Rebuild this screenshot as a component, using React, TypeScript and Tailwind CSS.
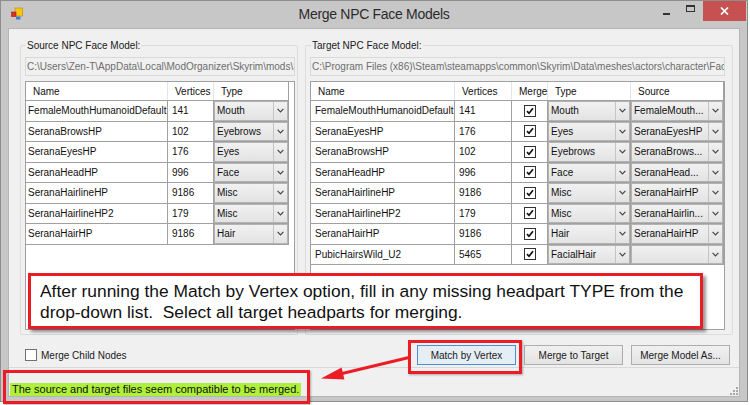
const SOURCE = [
  ["FemaleMouthHumanoidDefault", "141", "Mouth"],
  ["SeranaBrowsHP", "102", "Eyebrows"],
  ["SeranaEyesHP", "176", "Eyes"],
  ["SeranaHeadHP", "996", "Face"],
  ["SeranaHairlineHP", "9186", "Misc"],
  ["SeranaHairlineHP2", "179", "Misc"],
  ["SeranaHairHP", "9186", "Hair"],
];

const TARGET = [
  ["FemaleMouthHumanoidDefault", "141", "Mouth", "FemaleMouth..."],
  ["SeranaEyesHP", "176", "Eyes", "SeranaEyesHP"],
  ["SeranaBrowsHP", "102", "Eyebrows", "SeranaBrows..."],
  ["SeranaHeadHP", "996", "Face", "SeranaHead..."],
  ["SeranaHairlineHP", "9186", "Misc", "SeranaHairHP"],
  ["SeranaHairlineHP2", "179", "Misc", "SeranaHairlin..."],
  ["SeranaHairHP", "9186", "Hair", "SeranaHairHP"],
  ["PubicHairsWild_U2", "5465", "FacialHair", ""],
];

function Chevron() {
  return (
    <svg width="7" height="5" viewBox="0 0 7 5">
      <path d="M0.6 0.9 L3.5 3.8 L6.4 0.9" fill="none" stroke="#444" strokeWidth="1.2" />
    </svg>
  );
}

function Combo({ text }: { text: string }) {
  return (
    <div className="h-full flex border border-[#b3b3b3] bg-linear-to-b from-[#f1f1f1] to-[#e3e3e3]">
      <div className="flex-1 flex items-center pl-[2px] whitespace-nowrap overflow-hidden">{text}</div>
      <div className="w-[14px] border-l border-[#c4c4c4] flex items-center justify-center">
        <Chevron />
      </div>
    </div>
  );
}

function Check() {
  return (
    <div className="w-[12px] h-[12px] border border-[#333] bg-white flex items-center justify-center">
      <svg width="8" height="8" viewBox="0 0 8 8">
        <path d="M1 4.2 L3 6.3 L7 1.3" fill="none" stroke="#111" strokeWidth="1.7" />
      </svg>
    </div>
  );
}

function Header({ cols }: { cols: [string, string][] }) {
  return (
    <div className="flex h-[19px] w-fit border-b border-[#a0a0a0]">
      {cols.map(([label, w], i) => (
        <div
          key={label}
          className={`${w} flex items-center pl-[7px] border-r ${
            i === cols.length - 1 ? "border-[#a0a0a0]" : "border-[#e4e4e4]"
          }`}
        >
          {label}
        </div>
      ))}
    </div>
  );
}

function PathBox({ text }: { text: string }) {
  return (
    <div className="h-[19px] border border-[#d9d9d9] bg-[#f0f0f0] flex items-center pl-px text-[#6d6d6d] whitespace-nowrap overflow-hidden">
      {text}
    </div>
  );
}

export default function App() {
  return (
    <div className="w-[750px] h-[405px] bg-white relative overflow-hidden font-['Liberation_Sans',Arial,sans-serif] text-[10px] text-[#111]">
      {/* window */}
      <div className="w-[748px] h-[402px] bg-[#c7c7c7] border border-[#8e8e8e] flex flex-col">
        {/* title bar */}
        <div className="h-[27px] grid grid-cols-[1fr_auto_1fr] shrink-0">
          <div className="flex items-start pl-[10px] pt-[6px]">
            <svg width="12" height="13" viewBox="0 0 12 13">
              <rect x="4" y="1" width="7.5" height="8" fill="#f5c518" stroke="#c89a00" strokeWidth="0.8" />
              <rect x="0.5" y="5" width="4.5" height="4.5" fill="#d9312b" stroke="#9e1d17" strokeWidth="0.6" />
              <rect x="5" y="9.5" width="4.5" height="3" fill="#3f7fd6" />
            </svg>
          </div>
          <div className="flex items-center text-[14px] tracking-[-0.3px] text-[#2b2b2b] pb-[1px]">
            Merge NPC Face Models
          </div>
          <div className="flex justify-end items-start">
            <div className="w-[22px] h-[20px] flex items-center justify-center">
              <div className="w-[7px] h-[2px] bg-[#333] mt-[6px]" />
            </div>
            <div className="w-[26px] h-[20px] flex items-center justify-center">
              <div className="w-[9px] h-[7px] border border-t-2 border-[#333] mb-[6px]" />
            </div>
            <div className="w-[43px] h-[20px] bg-[#c75050] mr-px flex items-center justify-center">
              <svg width="9" height="8" viewBox="0 0 9 8">
                <path d="M1 0.5 L8 7.5 M8 0.5 L1 7.5" stroke="#fff" strokeWidth="1.7" />
              </svg>
            </div>
          </div>
        </div>

        {/* client */}
        <div className="flex-1 mx-[7px] mb-[4px] bg-[#f0f0f0] border border-[#b5b5b5] flex flex-col">
          <div className="flex mt-[10px]">
            {/* Source */}
            <fieldset className="w-[278px] ml-[11px] border border-[#dcdcdc] rounded-[2px] pl-[4px] pb-[4px]">
              <legend className="ml-px px-px leading-[13px] text-[#1a1a1a]">Source NPC Face Model:</legend>
              <div className="w-[270px] mt-[5px]">
                <PathBox text={"C:\\Users\\Zen-T\\AppData\\Local\\ModOrganizer\\Skyrim\\mods\\Serana"} />
              </div>
              <div className="w-[270px] h-[249px] mt-[5px] border border-[#a0a0a0] bg-white overflow-hidden">
                <Header cols={[["Name", "w-[142px]"], ["Vertices", "w-[46px]"], ["Type", "w-[75px]"]]} />
                {SOURCE.map(([n, v, t]) => (
                  <div key={n} className="flex w-fit h-[20.5px]">
                    <div className="w-[142px] border-r border-b border-[#a0a0a0] flex items-center pl-[2px]">{n}</div>
                    <div className="w-[46px] border-r border-b border-[#a0a0a0] flex items-center pl-[4px]">{v}</div>
                    <div className="w-[75px] border-r border-b border-[#a0a0a0]">
                      <Combo text={t} />
                    </div>
                  </div>
                ))}
              </div>
            </fieldset>

            {/* Target */}
            <fieldset className="w-[428px] ml-[7px] border border-[#dcdcdc] rounded-[2px] pl-[4px] pb-[4px]">
              <legend className="ml-px px-px leading-[13px] text-[#1a1a1a]">Target NPC Face Model:</legend>
              <div className="w-[415px] mt-[5px]">
                <PathBox
                  text={
                    "C:\\Program Files (x86)\\Steam\\steamapps\\common\\Skyrim\\Data\\meshes\\actors\\character\\FaceGenData\\FaceGeom"
                  }
                />
              </div>
              <div className="w-[415px] h-[249px] mt-[5px] border border-[#a0a0a0] bg-white overflow-hidden">
                <Header
                  cols={[
                    ["Name", "w-[144px]"],
                    ["Vertices", "w-[57px]"],
                    ["Merge", "w-[36px]"],
                    ["Type", "w-[83px]"],
                    ["Source", "w-[93px]"],
                  ]}
                />
                {TARGET.map(([n, v, t, s]) => (
                  <div key={n} className="flex w-fit h-[20.5px]">
                    <div className="w-[144px] border-r border-b border-[#a0a0a0] flex items-center pl-[4px]">{n}</div>
                    <div className="w-[57px] border-r border-b border-[#a0a0a0] flex items-center pl-[4px]">{v}</div>
                    <div className="w-[36px] border-r border-b border-[#a0a0a0] flex items-center justify-center">
                      <Check />
                    </div>
                    <div className="w-[83px] border-r border-b border-[#a0a0a0]">
                      <Combo text={t} />
                    </div>
                    <div className="w-[93px] border-r border-b border-[#a0a0a0]">
                      <Combo text={s} />
                    </div>
                  </div>
                ))}
              </div>
            </fieldset>
          </div>

          {/* bottom controls */}
          <div className="flex items-center h-[20px] mt-[10px]">
            <div className="ml-[16px] w-[12px] h-[12px] border border-[#707070] bg-white" />
            <span className="ml-[4px] text-[#1a1a1a]">Merge Child Nodes</span>
            <div className="ml-auto mr-[9px] flex gap-[8px]">
              <button className="w-[99px] h-[20px] border border-[#4a90d9] bg-[#e5edf5] text-[10px] text-[#1a1a1a]">
                Match by Vertex
              </button>
              <button className="w-[99px] h-[20px] border border-[#adadad] bg-linear-to-b from-[#f0f0f0] to-[#e3e3e3] text-[10px] text-[#1a1a1a]">
                Merge to Target
              </button>
              <button className="w-[99px] h-[20px] border border-[#adadad] bg-linear-to-b from-[#f0f0f0] to-[#e3e3e3] text-[10px] text-[#1a1a1a]">
                Merge Model As...
              </button>
            </div>
          </div>

          {/* status strip */}
          <div className="flex-1 mt-[2px] border-t border-[#d9d9d9] flex items-end pl-px">
            <span className="h-[13px] px-[2px] bg-[#aef03a] text-[11px] leading-[13px] text-[#111]">
              The source and target files seem compatible to be merged.
            </span>
            <svg className="ml-auto mr-[1px] mb-[1px]" width="9" height="9" viewBox="0 0 9 9">
              <rect x="7" y="1" width="2" height="2" fill="#a8a8a8" />
              <rect x="4" y="4" width="2" height="2" fill="#a8a8a8" />
              <rect x="7" y="4" width="2" height="2" fill="#a8a8a8" />
              <rect x="1" y="7" width="2" height="2" fill="#a8a8a8" />
              <rect x="4" y="7" width="2" height="2" fill="#a8a8a8" />
              <rect x="7" y="7" width="2" height="2" fill="#a8a8a8" />
            </svg>
          </div>
        </div>
      </div>

      {/* annotations */}
      <div className="absolute left-[28px] top-[273px] w-[675px] h-[56px] bg-white border-[3px] border-[#ec1c24] shadow-[3px_3px_3px_rgba(0,0,0,0.4)] pl-[9px] pt-[5px] text-[17.4px] leading-[21px] text-[#111] whitespace-nowrap">
        <div>After running the Match by Vertex option, fill in any missing headpart TYPE from the</div>
        <div>drop-down list.&nbsp; Select all target headparts for merging.</div>
      </div>
      <div className="absolute left-[408px] top-[340px] w-[114px] h-[34px] border-[3px] border-[#ec1c24] shadow-[1px_1px_2px_rgba(0,0,0,0.3)]" />
      <div className="absolute left-[3px] top-[370px] w-[307px] h-[34px] border-[3px] border-[#ec1c24] shadow-[1px_1px_2px_rgba(0,0,0,0.3)]" />
      <svg className="absolute left-0 top-0 pointer-events-none" width="750" height="405" viewBox="0 0 750 405">
        <line x1="409" y1="357.5" x2="338" y2="374.5" stroke="#ec1c24" strokeWidth="3" />
        <polygon points="321,378.5 341.6,367.4 344.4,379.4" fill="#ec1c24" />
      </svg>
    </div>
  );
}
